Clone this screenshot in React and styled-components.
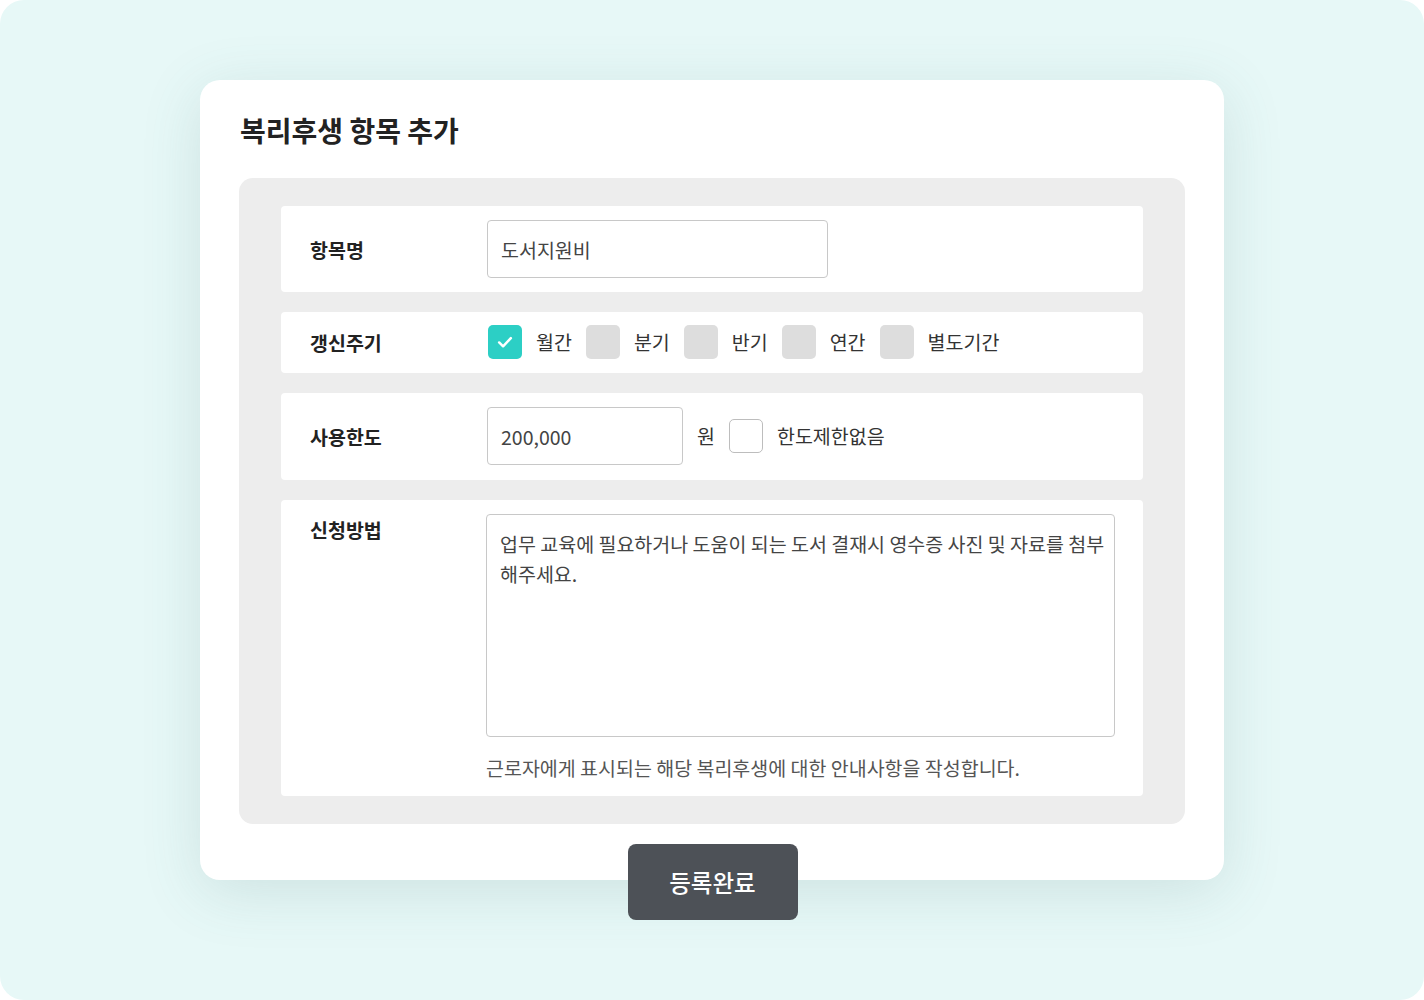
import React from "react";
import styled, { createGlobalStyle } from "styled-components";

const Global = createGlobalStyle`
  html, body { margin: 0; padding: 0; background: #ffffff; }
  body { font-family: "Noto Sans CJK KR", "Noto Sans", sans-serif; }
  * { box-sizing: border-box; }
`;

const Page = styled.div`
  width: 1424px;
  height: 1000px;
  background: #e7f8f7;
  border-radius: 24px;
  padding-top: 80px;
  display: flex;
  justify-content: center;
  align-items: flex-start;
`;

const Card = styled.div`
  width: 1024px;
  height: 800px;
  background: #fff;
  border-radius: 20px;
  box-shadow: 0 12px 60px rgba(70, 120, 120, 0.16);
  padding: 30px 39px 0;
  display: flex;
  flex-direction: column;
`;

const Title = styled.h1`
  margin: 0 0 28px 1px;
  font-size: 28px;
  line-height: 40px;
  font-weight: 700;
  color: #222;
`;

const Panel = styled.div`
  background: #ededed;
  border-radius: 14px;
  padding: 28px 42px;
  display: flex;
  flex-direction: column;
  gap: 20px;
`;

const Row = styled.div`
  background: #fff;
  border-radius: 4px;
  display: grid;
  grid-template-columns: 178px 1fr;
  align-items: ${(p) => (p.$top ? "start" : "center")};
  padding: ${(p) => p.$pad || "14px 28px"};
`;

const Label = styled.div`
  font-size: 19.5px;
  font-weight: 700;
  color: #222;
  padding-left: 1px;
  margin-top: ${(p) => p.$mt || "0"};
`;

const Controls = styled.div`
  display: flex;
  align-items: center;
  gap: 14px;
  padding-left: ${(p) => p.$indent || "0"};
`;

const TextInput = styled.div`
  width: ${(p) => p.$w}px;
  height: 58px;
  border: 1px solid #c8c8c8;
  border-radius: 4px;
  padding: 0 13px;
  display: flex;
  align-items: center;
  font-size: 19.5px;
  color: #444;
`;

const Box = styled.span`
  width: 34px;
  height: 34px;
  border-radius: 5px;
  flex: none;
  display: inline-flex;
  align-items: center;
  justify-content: center;
  background: ${(p) => (p.$checked ? "#2ccfc5" : p.$outline ? "#fff" : "#dddddd")};
  border: ${(p) => (p.$outline ? "1px solid #bdbdbd" : "none")};
`;

const OptText = styled.span`
  font-size: 19.5px;
  color: #333;
  line-height: 26px;
`;

const Area = styled.div`
  width: 629px;
  height: 223px;
  margin-left: -1px;
  border: 1px solid #c8c8c8;
  border-radius: 4px;
  padding: 14px 5px 14px 13px;
  font-size: 19.5px;
  line-height: 30px;
  color: #444;
  word-break: break-all;
`;

const Help = styled.div`
  margin: 18px 0 0 -1px;
  font-size: 19.5px;
  line-height: 26px;
  color: #555;
`;

const Button = styled.button`
  align-self: center;
  margin-top: 20px;
  margin-left: 1px;
  width: 170px;
  height: 76px;
  border: none;
  border-radius: 8px;
  background: #4d5157;
  color: #fff;
  font-family: inherit;
  font-size: 23.5px;
  font-weight: 500;
  flex: none;
`;

const Check = () => (
  <svg width="18" height="18" viewBox="0 0 16 16" fill="none">
    <path d="M2.8 8.4 L6.3 11.8 L13.2 4.6" stroke="#fff" strokeWidth="2.2" strokeLinecap="round" strokeLinejoin="round" />
  </svg>
);

const cycles = [
  { t: "월간", c: true },
  { t: "분기" },
  { t: "반기" },
  { t: "연간" },
  { t: "별도기간" },
];

export default function App() {
  return (
    <>
      <Global />
      <Page>
        <Card>
          <Title>복리후생 항목 추가</Title>
          <Panel>
            <Row>
              <Label>항목명</Label>
              <Controls>
                <TextInput $w={341}>도서지원비</TextInput>
              </Controls>
            </Row>
            <Row $pad="13px 28px 14px">
              <Label>갱신주기</Label>
              <Controls $indent="1px">
                {cycles.map((c) => (
                  <React.Fragment key={c.t}>
                    <Box $checked={c.c}>{c.c && <Check />}</Box>
                    <OptText>{c.t}</OptText>
                  </React.Fragment>
                ))}
              </Controls>
            </Row>
            <Row $pad="14px 28px 15px">
              <Label>사용한도</Label>
              <Controls>
                <TextInput $w={196}>200,000</TextInput>
                <OptText>원</OptText>
                <Box $outline />
                <OptText>한도제한없음</OptText>
              </Controls>
            </Row>
            <Row $top $pad="14px 28px 15px">
              <Label $mt="1px">신청방법</Label>
              <div>
                <Area>
                  업무 교육에 필요하거나 도움이 되는 도서 결재시 영수증 사진 및 자료를 첨부해주세요.
                </Area>
                <Help>근로자에게 표시되는 해당 복리후생에 대한 안내사항을 작성합니다.</Help>
              </div>
            </Row>
          </Panel>
          <Button>등록완료</Button>
        </Card>
      </Page>
    </>
  );
}
